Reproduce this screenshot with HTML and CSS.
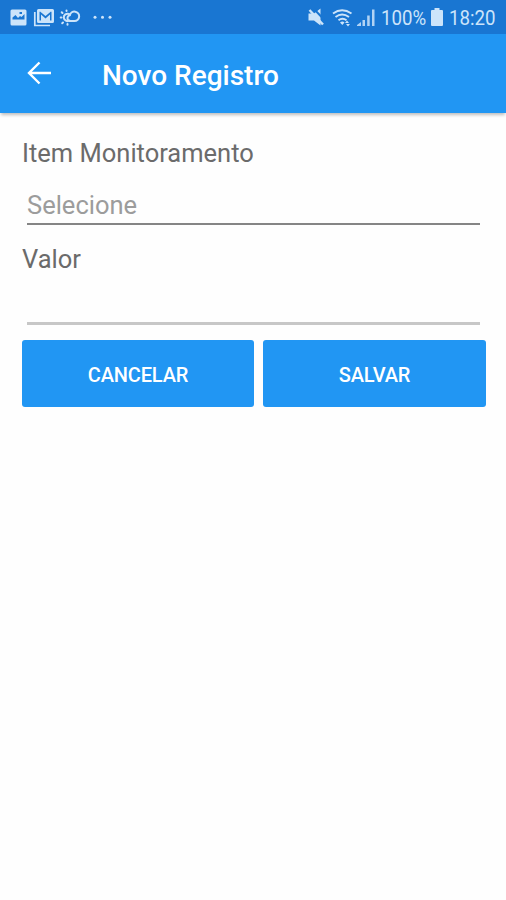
FILE: index.html
```html
<!DOCTYPE html>
<html lang="pt-BR">
<head>
<meta charset="utf-8">
<title>Novo Registro</title>
<link rel="stylesheet" href="styles.css">
</head>
<body>
<div class="status">
  <svg class="notifications" width="104" height="34" viewBox="0 0 104 34" aria-hidden="true">
    <path fill-rule="evenodd" d="M3 9.500h13q1.500 0 1.500 1.500v13q0 1.500-1.500 1.500H3q-1.500 0-1.500-1.500V11q0-1.500 1.500-1.500zM3.500 19.500h12V14l-3 3-1.500-1-2 2-2.500-3-3 2.500zM10.500 12h2.500v2h-2.500z"/>
    <path d="M25.800 12v13.500H41" fill="none" stroke="currentColor" stroke-width="1.700"/>
    <path fill-rule="evenodd" d="M29.500 9h14q1.500 0 1.500 1.500V21.500q0 1.500-1.500 1.500h-14q-1.500 0-1.500-1.500V10.500q0-1.500 1.500-1.500zM30.500 12v8.500H32v-6l4.500 4 4.500-4v6h1.500V12l-.5-.5-5.500 4.500-5.500-4.500z"/>
    <g fill="none" stroke="currentColor" stroke-width="2" stroke-linecap="round">
      <path d="M60 14a3.700 3.700 0 1 0 .5 6.500"/>
      <path d="M60.500 21h5a4.700 4.700 0 1 0-4.600-5.800M60.500 21a3 3 0 0 1 .5-5.800"/>
      <path d="M57.500 11v-.5M53.500 13l-.8-.8M52.500 17.500h-.8M54 22.500l-.8.8M58.500 24v.8"/>
    </g>
    <circle cx="86" cy="17.300" r="1.500"/><circle cx="93.500" cy="17.300" r="1.500"/><circle cx="101" cy="17.300" r="1.500"/>
  </svg>
  <svg class="signals" width="70" height="34" viewBox="0 0 70 34" aria-hidden="true">
    <path d="M1.500 13.500H7L13.500 8.500V25.500L7 20.500H1.500z"/>
    <path class="gap" d="M6.500 8.500 17 19.500"/>
    <path d="M2.500 10l13.500 14.500" fill="none" stroke="currentColor" stroke-width="2.400"/>
    <g fill="none" stroke="currentColor" stroke-width="1.900">
      <path d="M26 13.500q9-6.500 18.500 0M28.500 17q6.500-5 13.500 0M31.500 20.300q4-3 8 0"/>
    </g>
    <path d="M33 22.500q2.500-2 4.500 0L35.300 25zM38 23l2-2.500 2 2.500zM39 24h4l-2 2.500z"/>
    <path d="M50 25 54 22V26h-4zM55.500 20H58v6h-2.500zM60.200 15.500h2.500V26h-2.500zM65 9.500h2.500V26H65z" opacity=".85"/>
  </svg>
  <span class="percent"><span>100%</span></span>
  <svg class="battery" width="12" height="18" viewBox="0 0 12 18" aria-hidden="true"><path d="M3.500 0h5v2H11q1 0 1 1v14q0 1-1 1H1q-1 0-1-1V3q0-1 1-1h2.500z"/></svg>
  <span class="time"><span>18:20</span></span>
</div>
<header class="appbar">
  <svg class="back" width="24" height="24" viewBox="0 0 24 24" aria-label="Voltar"><path d="M12.500 1.500 2 12l10.500 10.500M2.500 12H24"/></svg>
  <h1>Novo Registro</h1>
</header>
<main class="form">
  <label class="label item-label" for="item">Item Monitoramento</label>
  <div class="field select" id="item">Selecione</div>
  <label class="label value-label" for="value">Valor</label>
  <div class="field value" id="value"></div>
  <div class="actions">
    <button type="button">CANCELAR</button>
    <button type="button">SALVAR</button>
  </div>
</main>
</body>
</html>
```
FILE: styles.css
```css
* { box-sizing: border-box; }
body {
  margin: 0;
  height: 900px;
  background: #fefefe;
  font-family: Roboto, "Liberation Sans", sans-serif;
}
.status {
  display: flex;
  align-items: center;
  height: 34px;
  padding-left: 9px;
  background: #1976d2;
  color: #cce4fa;
  font-size: 21px;
  line-height: 34px;
  white-space: nowrap;
}
svg { display: block; flex: none; fill: currentColor; }
.signals { margin-left: 194px; }
.gap { fill: none; stroke: #1976d2; stroke-width: 2; }
.percent { width: 45px; margin-left: 4px; padding-top: 2px; }
.time { width: 48px; margin-left: 6px; padding-top: 2px; }
.percent span, .time span {
  display: inline-block;
  transform: scaleX(.89);
  transform-origin: left;
}
.battery { margin-left: 5px; }
.appbar {
  display: flex;
  align-items: center;
  height: 79px;
  padding-left: 27px;
  background: #2196f3;
  color: #fff;
  box-shadow: 0 3px 3px -1px rgba(0, 0, 0, .25);
}
.back { margin-top: -1px; fill: none; stroke: #fff; stroke-width: 2.400; }
h1 {
  margin: 4px 0 0 51px;
  font-size: 28px;
  font-weight: 500;
  line-height: 34px;
}
.form { padding: 23px 20px 0 22px; }
.label {
  display: block;
  color: #6b6b6b;
  font-size: 25.500px;
  line-height: 34px;
}
.field { margin: 0 6px 0 5px; }
.select {
  height: 55px;
  padding-top: 18px;
  border-bottom: 2px solid #858585;
  color: #9c9c9c;
  font-size: 25.500px;
  line-height: 34px;
}
.value-label { margin-top: 17px; }
.value { height: 49px; border-bottom: 3px solid #c7c7c7; }
.actions {
  display: grid;
  grid-template-columns: 232px 223px;
  gap: 9px;
  margin-top: 15px;
}
button {
  height: 67px;
  padding: 2px 0 0;
  border: 0;
  border-radius: 3px;
  background: #2196f3;
  color: #fff;
  font: 500 20px/24px Roboto, "Liberation Sans", sans-serif;
  letter-spacing: -.15px;
}
```
